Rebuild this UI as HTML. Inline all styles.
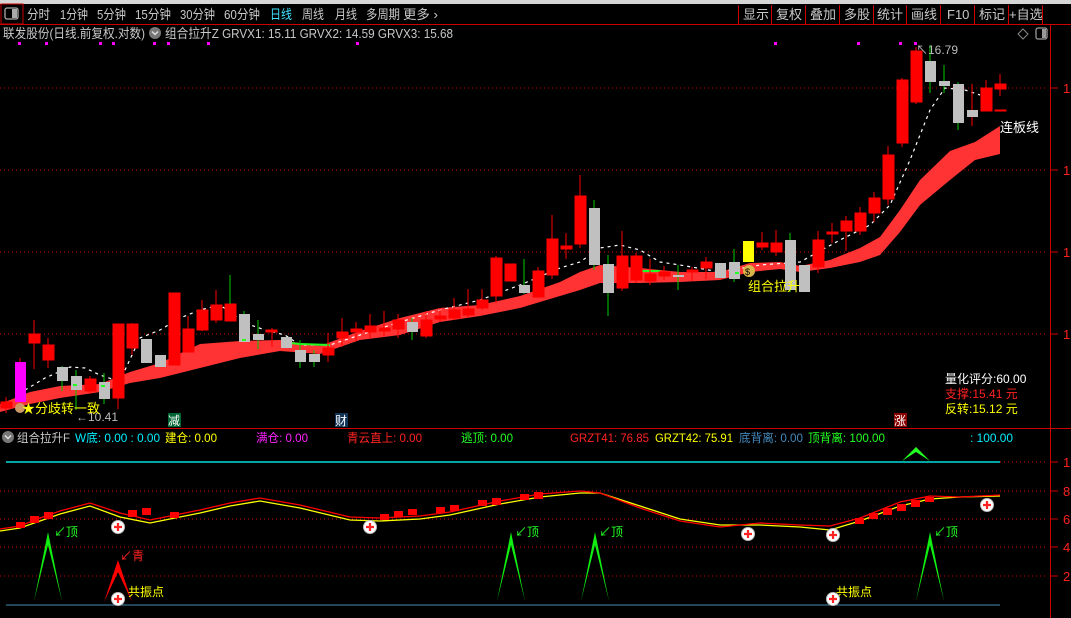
<!DOCTYPE html>
<html><head><meta charset="utf-8"><style>
body{margin:0;background:#000;width:1071px;height:618px;overflow:hidden;font-family:"Liberation Sans","Noto Sans CJK SC",sans-serif;}
svg{position:absolute;left:0;top:0}
text{font-family:"Liberation Sans","Noto Sans CJK SC",sans-serif;}
</style></head><body>
<svg width="1071" height="618" viewBox="0 0 1071 618" xmlns="http://www.w3.org/2000/svg">
<rect x="0" y="0" width="1071" height="4" fill="#d6d6d6"/>
<rect x="1" y="4" width="22" height="20" fill="none" stroke="#c00" stroke-width="1"/>
<rect x="5" y="8" width="13" height="11" rx="2" fill="none" stroke="#aaa" stroke-width="1.3"/><rect x="12" y="9" width="5" height="9" fill="#aaa"/>
<line x1="0" y1="24.5" x2="1071" y2="24.5" stroke="#c00"/>
<g font-size="13" fill="#c8c8c8">
<text x="27" y="19" textLength="23" lengthAdjust="spacingAndGlyphs">分时</text><text x="60" y="19" textLength="28" lengthAdjust="spacingAndGlyphs">1分钟</text><text x="97" y="19" textLength="29" lengthAdjust="spacingAndGlyphs">5分钟</text><text x="135" y="19" textLength="36" lengthAdjust="spacingAndGlyphs">15分钟</text><text x="180" y="19" textLength="35" lengthAdjust="spacingAndGlyphs">30分钟</text><text x="224" y="19" textLength="36" lengthAdjust="spacingAndGlyphs">60分钟</text><text x="270" y="19" fill="#3fe3ff" textLength="22" lengthAdjust="spacingAndGlyphs">日线</text><text x="302" y="19" textLength="22" lengthAdjust="spacingAndGlyphs">周线</text><text x="335" y="19" textLength="22" lengthAdjust="spacingAndGlyphs">月线</text><text x="366" y="19" textLength="34" lengthAdjust="spacingAndGlyphs">多周期</text><text x="403" y="19" textLength="35" lengthAdjust="spacingAndGlyphs">更多 ›</text>
<text x="743" y="19">显示</text><text x="776" y="19">复权</text><text x="810" y="19">叠加</text><text x="844" y="19">多股</text><text x="877" y="19">统计</text><text x="911" y="19">画线</text><text x="947" y="19">F10</text><text x="979" y="19">标记</text><text x="1009" y="19">+自选</text>
</g>
<g stroke="#c00"><line x1="738.5" y1="5" x2="738.5" y2="24"/><line x1="771.5" y1="5" x2="771.5" y2="24"/><line x1="805.5" y1="5" x2="805.5" y2="24"/><line x1="839.5" y1="5" x2="839.5" y2="24"/><line x1="873.5" y1="5" x2="873.5" y2="24"/><line x1="906.5" y1="5" x2="906.5" y2="24"/><line x1="940.5" y1="5" x2="940.5" y2="24"/><line x1="974.5" y1="5" x2="974.5" y2="24"/><line x1="1008.5" y1="5" x2="1008.5" y2="24"/><line x1="1042.5" y1="5" x2="1042.5" y2="24"/></g>
<line x1="1050.5" y1="25" x2="1050.5" y2="618" stroke="#c00"/>
<line x1="0" y1="428.5" x2="1071" y2="428.5" stroke="#c00"/>
<g stroke="#c00" stroke-dasharray="1,3"><line x1="0" y1="88" x2="1048" y2="88"/><line x1="0" y1="170" x2="1048" y2="170"/><line x1="0" y1="252" x2="1048" y2="252"/><line x1="0" y1="334" x2="1048" y2="334"/>
<line x1="0" y1="491" x2="1048" y2="491"/><line x1="0" y1="519" x2="1048" y2="519"/><line x1="0" y1="547" x2="1048" y2="547"/><line x1="0" y1="576" x2="1048" y2="576"/><line x1="1000" y1="462" x2="1048" y2="462"/></g>
<g stroke="#c00"><line x1="1050" y1="88" x2="1058" y2="88"/><line x1="1050" y1="170" x2="1058" y2="170"/><line x1="1050" y1="252" x2="1058" y2="252"/><line x1="1050" y1="334" x2="1058" y2="334"/><line x1="1050" y1="462" x2="1058" y2="462"/><line x1="1050" y1="491" x2="1058" y2="491"/><line x1="1050" y1="519" x2="1058" y2="519"/><line x1="1050" y1="547" x2="1058" y2="547"/><line x1="1050" y1="576" x2="1058" y2="576"/></g>
<g font-size="13" fill="#ff2020"><text x="1063" y="93">1</text><text x="1063" y="175">1</text><text x="1063" y="257">1</text><text x="1063" y="339">1</text><text x="1063" y="467">1</text><text x="1063" y="496">8</text><text x="1063" y="524">6</text><text x="1063" y="552">4</text><text x="1063" y="581">2</text></g>
<g font-size="13"><text x="3" y="38" fill="#c8c8c8" textLength="142" lengthAdjust="spacingAndGlyphs">联发股份(日线.前复权.对数)</text>
<circle cx="155" cy="33" r="6" fill="#777"/><path d="M152 31.5l3 3 3-3" stroke="#ddd" stroke-width="1.5" fill="none"/>
<text x="165" y="38" fill="#c8c8c8" textLength="288" lengthAdjust="spacingAndGlyphs">组合拉升Z  GRVX1: 15.11  GRVX2: 14.59  GRVX3: 15.68</text></g>
<path d="M1023 29l5 5-5 5-5-5z" fill="none" stroke="#888"/>
<rect x="1036" y="28" width="11" height="11" rx="2" fill="none" stroke="#999" stroke-width="1.3"/><rect x="1042" y="29" width="4" height="9" fill="#999"/>
<g fill="#f0f"><rect x="18" y="42" width="3" height="3"/><rect x="45" y="42" width="3" height="3"/><rect x="99" y="42" width="3" height="3"/><rect x="112" y="42" width="3" height="3"/><rect x="153" y="42" width="3" height="3"/><rect x="167" y="42" width="3" height="3"/><rect x="207" y="42" width="3" height="3"/><rect x="356" y="42" width="3" height="3"/><rect x="774" y="42" width="3" height="3"/><rect x="857" y="42" width="3" height="3"/><rect x="899" y="42" width="3" height="3"/><rect x="914" y="42" width="3" height="3"/></g>
<polygon fill="#ff3333" points="0,404 30,392 60,386 100,384 130,372 160,363 200,344 240,341 280,340 320,346 360,331 400,318 440,308 480,305 520,296 560,282 580,272 600,265 640,268 680,272 720,272 750,263 780,262 800,266 830,260 860,248 880,237 900,210 920,180 950,151 975,142 1000,126 1000,154 975,160 950,180 920,205 900,232 880,255 860,262 830,268 800,272 780,269 750,272 720,280 680,282 640,283 600,283 580,290 560,296 520,308 480,316 440,322 400,335 360,340 320,354 280,351 240,358 200,368 160,378 130,383 100,392 60,398 30,404 0,412"/>
<polyline fill="none" stroke="#fff" stroke-width="1.2" stroke-dasharray="3,4" points="25,390 45,378 70,367 85,368 100,375 115,380 125,370 140,338 160,330 180,318 200,310 220,305 245,323 265,330 285,335 300,345 330,345 360,335 400,322 440,310 480,300 520,285 560,268 580,262 600,248 620,245 640,250 660,262 680,265 720,272 760,265 800,262 840,240 870,225 890,205 910,160 930,110 945,88 965,90 980,95"/>
<polyline fill="none" stroke="#2f2" stroke-width="2" points="290,343 300,344 330,345"/>
<line x1="636" y1="271" x2="660" y2="271" stroke="#2f2" stroke-width="2"/>
<g stroke-width="1">
<g stroke="#f00" fill="#f00">
<line x1="6" y1="397" x2="6" y2="413"/><rect x="1" y="402" width="11" height="6"/>
<line x1="34" y1="320" x2="34" y2="369"/><rect x="29" y="334" width="11" height="9"/>
<line x1="48" y1="338" x2="48" y2="368"/><rect x="43" y="345" width="11" height="15"/>
<line x1="90" y1="376" x2="90" y2="394"/><rect x="85" y="379" width="11" height="12"/>
<line x1="118" y1="324" x2="118" y2="409"/><rect x="113" y="324" width="11" height="74"/>
<line x1="132" y1="323" x2="132" y2="355"/><rect x="127" y="324" width="11" height="24"/>
<line x1="174" y1="293" x2="174" y2="365"/><rect x="169" y="293" width="11" height="72"/>
<line x1="188" y1="316" x2="188" y2="352"/><rect x="183" y="329" width="11" height="23"/>
<line x1="202" y1="300" x2="202" y2="331"/><rect x="197" y="310" width="11" height="20"/>
<line x1="216" y1="290" x2="216" y2="323"/><rect x="211" y="305" width="11" height="15"/>
<rect x="225" y="304" width="11" height="17"/>
<line x1="272" y1="328" x2="272" y2="347"/><rect x="266" y="330" width="11" height="2"/>
<line x1="328" y1="333" x2="328" y2="362"/><rect x="323" y="348" width="11" height="7"/>
<line x1="342" y1="318" x2="342" y2="347"/><rect x="337" y="332" width="11" height="6"/>
<line x1="356" y1="322" x2="356" y2="341"/><rect x="351" y="329" width="11" height="3"/>
<line x1="370" y1="314" x2="370" y2="338"/><rect x="365" y="326" width="11" height="6"/>
<line x1="384" y1="311" x2="384" y2="336"/><rect x="379" y="328" width="11" height="3"/>
<line x1="398" y1="314" x2="398" y2="338"/><rect x="393" y="320" width="11" height="9"/>
<line x1="426" y1="311" x2="426" y2="338"/><rect x="421" y="320" width="11" height="16"/>
<line x1="440" y1="308" x2="440" y2="322"/><rect x="435" y="316" width="11" height="3"/>
<line x1="454" y1="298" x2="454" y2="320"/><rect x="449" y="310" width="11" height="8"/>
<line x1="468" y1="289" x2="468" y2="318"/><rect x="463" y="309" width="11" height="6"/>
<line x1="482" y1="289" x2="482" y2="310"/><rect x="477" y="300" width="11" height="8"/>
<line x1="496" y1="256" x2="496" y2="303"/><rect x="491" y="258" width="11" height="38"/>
<rect x="505" y="264" width="11" height="17"/>
<line x1="538" y1="267" x2="538" y2="298"/><rect x="533" y="271" width="11" height="26"/>
<line x1="552" y1="215" x2="552" y2="279"/><rect x="547" y="239" width="11" height="36"/>
<line x1="566" y1="233" x2="566" y2="259"/><rect x="561" y="246" width="11" height="3"/>
<line x1="580" y1="175" x2="580" y2="248"/><rect x="575" y="196" width="11" height="48"/>
<line x1="622" y1="231" x2="622" y2="291"/><rect x="617" y="256" width="11" height="32"/>
<line x1="636" y1="253" x2="636" y2="283"/><rect x="631" y="256" width="11" height="24"/>
<line x1="650" y1="259" x2="650" y2="285"/><rect x="645" y="274" width="11" height="7"/>
<line x1="664" y1="266" x2="664" y2="280"/><rect x="659" y="272" width="11" height="4"/>
<line x1="692" y1="267" x2="692" y2="281"/><rect x="687" y="270" width="11" height="2"/>
<line x1="706" y1="257" x2="706" y2="279"/><rect x="701" y="262" width="11" height="6"/>
<line x1="762" y1="232" x2="762" y2="250"/><rect x="757" y="243" width="11" height="4"/>
<line x1="776" y1="230" x2="776" y2="256"/><rect x="771" y="243" width="11" height="9"/>
<line x1="818" y1="231" x2="818" y2="273"/><rect x="813" y="240" width="11" height="27"/>
<line x1="832" y1="223" x2="832" y2="243"/><rect x="827" y="232" width="11" height="2"/>
<line x1="846" y1="216" x2="846" y2="251"/><rect x="841" y="221" width="11" height="10"/>
<line x1="860" y1="207" x2="860" y2="235"/><rect x="855" y="213" width="11" height="18"/>
<line x1="874" y1="192" x2="874" y2="222"/><rect x="869" y="198" width="11" height="15"/>
<line x1="888" y1="146" x2="888" y2="205"/><rect x="883" y="155" width="11" height="44"/>
<line x1="902" y1="78" x2="902" y2="147"/><rect x="897" y="80" width="11" height="63"/>
<line x1="916" y1="47" x2="916" y2="104"/><rect x="911" y="51" width="11" height="51"/>
<line x1="958" y1="84" x2="958" y2="126"/>
<line x1="972" y1="84" x2="972" y2="126"/>
<line x1="986" y1="80" x2="986" y2="111"/><rect x="981" y="88" width="11" height="23"/>
<line x1="1000" y1="74" x2="1000" y2="96"/><rect x="995" y="84" width="11" height="5"/>
<rect x="995" y="110" width="11" height="1"/>
</g>
<rect x="15" y="362" width="11" height="40" fill="#f0f"/><line x1="20" y1="358" x2="20" y2="362" stroke="#f00"/>
<g stroke="#0c0">
<line x1="62" y1="366" x2="62" y2="391"/><line x1="76" y1="370" x2="76" y2="410"/><line x1="104" y1="373" x2="104" y2="404"/><line x1="230" y1="275" x2="230" y2="304"/><line x1="244" y1="311" x2="244" y2="342"/><line x1="258" y1="320" x2="258" y2="349"/><line x1="300" y1="340" x2="300" y2="368"/><line x1="314" y1="350" x2="314" y2="367"/><line x1="412" y1="318" x2="412" y2="340"/><line x1="524" y1="259" x2="524" y2="294"/><line x1="594" y1="200" x2="594" y2="270"/><line x1="608" y1="255" x2="608" y2="316"/><line x1="678" y1="265" x2="678" y2="290"/><line x1="734" y1="249" x2="734" y2="282"/><line x1="790" y1="233" x2="790" y2="292"/><line x1="930" y1="45" x2="930" y2="93"/><line x1="944" y1="65" x2="944" y2="93"/><line x1="958" y1="82" x2="958" y2="130"/>
</g>
<g fill="#c0c0c0">
<rect x="57" y="367" width="11" height="14"/><rect x="71" y="376" width="11" height="14"/><rect x="99" y="382" width="11" height="17"/><rect x="141" y="339" width="11" height="24"/><rect x="155" y="355" width="11" height="12"/><rect x="239" y="314" width="11" height="28"/><rect x="253" y="334" width="11" height="6"/><rect x="281" y="337" width="11" height="11"/><rect x="295" y="350" width="11" height="12"/><rect x="309" y="354" width="11" height="8"/><rect x="407" y="322" width="11" height="10"/><rect x="519" y="285" width="11" height="8"/><rect x="589" y="208" width="11" height="57"/><rect x="603" y="264" width="11" height="29"/><rect x="673" y="275" width="11" height="2"/><rect x="715" y="263" width="11" height="15"/><rect x="729" y="262" width="11" height="17"/><rect x="785" y="240" width="11" height="50"/><rect x="799" y="265" width="11" height="27"/><rect x="925" y="61" width="11" height="21"/><rect x="939" y="81" width="11" height="5"/><rect x="953" y="84" width="11" height="39"/><rect x="967" y="110" width="11" height="7"/>
</g>
<rect x="743" y="241" width="11" height="21" fill="#ff0"/>
<g fill="#2f2"><rect x="73" y="384" width="4" height="2"/><rect x="101" y="385" width="4" height="2"/><rect x="242" y="339" width="4" height="2"/><rect x="735" y="272" width="4" height="2"/></g>
</g>
<text x="916" y="54" font-size="12" fill="#bbb">↖16.79</text>
<text x="76" y="421" font-size="12" fill="#bbb">←10.41</text>
<circle cx="20" cy="408" r="5" fill="#c96"/>
<text x="22" y="413" font-size="13" fill="#ff0">★分歧转一致</text>
<circle cx="749" cy="271" r="6" fill="#dbb44a"/><text x="745" y="275" font-size="9" fill="#000">$</text>
<text x="748" y="291" font-size="13" fill="#ff0">组合拉升</text>
<text x="1000" y="132" font-size="13" fill="#fff">连板线</text>
<text x="945" y="383" font-size="12" fill="#fff">量化评分:60.00</text>
<text x="945" y="398" font-size="12" fill="#f22">支撑:15.41 元</text>
<text x="945" y="413" font-size="12" fill="#ff0">反转:15.12 元</text>
<rect x="168" y="413" width="13" height="14" fill="#063"/><text x="168" y="425" font-size="12" fill="#fff">减</text>
<rect x="335" y="413" width="13" height="14" fill="#135"/><text x="335" y="425" font-size="12" fill="#fff">财</text>
<rect x="894" y="413" width="13" height="14" fill="#800"/><text x="894" y="425" font-size="12" fill="#fff">涨</text>
<circle cx="8" cy="437" r="6" fill="#777"/><path d="M5 435.5l3 3 3-3" stroke="#ddd" stroke-width="1.5" fill="none"/>
<g font-size="12"><text x="17" y="442" fill="#c8c8c8" textLength="53" lengthAdjust="spacingAndGlyphs">组合拉升F</text><text x="75" y="442" fill="#0ef" textLength="85" lengthAdjust="spacingAndGlyphs">W底: 0.00  : 0.00</text><text x="165" y="442" fill="#ff0" textLength="52" lengthAdjust="spacingAndGlyphs">建仓: 0.00</text><text x="256" y="442" fill="#f2f" textLength="52" lengthAdjust="spacingAndGlyphs">满仓: 0.00</text><text x="347" y="442" fill="#f22" textLength="75" lengthAdjust="spacingAndGlyphs">青云直上: 0.00</text><text x="461" y="442" fill="#2f2" textLength="52" lengthAdjust="spacingAndGlyphs">逃顶: 0.00</text><text x="570" y="442" fill="#f22" textLength="79" lengthAdjust="spacingAndGlyphs">GRZT41: 76.85</text><text x="655" y="442" fill="#ff0" textLength="78" lengthAdjust="spacingAndGlyphs">GRZT42: 75.91</text><text x="739" y="442" fill="#48b" textLength="64" lengthAdjust="spacingAndGlyphs">底背离: 0.00</text><text x="808" y="442" fill="#2f2" textLength="77" lengthAdjust="spacingAndGlyphs">顶背离: 100.00</text><text x="970" y="442" fill="#0ef" textLength="43" lengthAdjust="spacingAndGlyphs">: 100.00</text></g>
<line x1="6" y1="462" x2="1000" y2="462" stroke="#0dd" stroke-width="1.5"/>
<polygon points="902,461 916,447 930,461 916,452" fill="#2f2"/>
<line x1="6" y1="605" x2="1000" y2="605" stroke="#4a8ab0" stroke-width="1"/>
<polyline fill="none" stroke="#ff0" stroke-width="1.3" points="0,531 20,528 40,521 60,514 90,506 120,517 150,523 200,513 230,506 260,501 300,508 350,520 380,521 420,519 450,515 500,504 540,497 580,493 600,493 640,506 680,519 720,525 760,525 800,527 830,530 860,521 900,506 930,499 960,497 1000,496"/>
<polyline fill="none" stroke="#f00" stroke-width="1.3" points="0,529 20,526 40,518 60,511 90,503 120,513 150,520 200,510 230,503 260,498 300,505 350,517 380,518 420,516 450,512 500,501 540,494 580,491 600,493 640,508 680,521 720,527 760,523 800,525 830,526 860,518 900,502 930,496 960,497 1000,495"/>
<g fill="#f00"><rect x="16" y="522" width="9" height="6"/><rect x="30" y="516" width="9" height="7"/><rect x="44" y="512" width="9" height="7"/><rect x="128" y="510" width="9" height="7"/><rect x="142" y="508" width="9" height="7"/><rect x="170" y="512" width="9" height="6"/><rect x="380" y="514" width="9" height="6"/><rect x="394" y="511" width="9" height="6"/><rect x="408" y="509" width="9" height="6"/><rect x="436" y="507" width="9" height="6"/><rect x="450" y="505" width="9" height="6"/><rect x="478" y="500" width="9" height="6"/><rect x="492" y="498" width="9" height="7"/><rect x="520" y="494" width="9" height="6"/><rect x="534" y="492" width="9" height="7"/><rect x="855" y="518" width="9" height="6"/><rect x="869" y="513" width="9" height="6"/><rect x="883" y="508" width="9" height="7"/><rect x="897" y="504" width="9" height="7"/><rect x="911" y="500" width="9" height="7"/><rect x="925" y="497" width="9" height="5"/></g>
<g fill="#1e1"><polygon points="34,601 48,532 62,601 48,545"/><polygon points="497,601 511,532 525,601 511,545"/><polygon points="581,601 595,532 609,601 595,545"/><polygon points="916,601 930,532 944,601 930,545"/></g>
<polygon points="104,602 118,560 132,602 118,572" fill="#f00"/>
<g font-size="12" fill="#2f2"><text x="54" y="536">↙顶</text><text x="515" y="536">↙顶</text><text x="599" y="536">↙顶</text><text x="934" y="536">↙顶</text></g>
<text x="120" y="560" font-size="12" fill="#f22">↙青</text>
<text x="128" y="596" font-size="12" fill="#ff0">共振点</text><text x="836" y="596" font-size="12" fill="#ff0">共振点</text>
<g>
<circle cx="118" cy="527" r="6.5" fill="#fff" stroke="#bbb"/><path d="M114 527h8M118 523v8" stroke="#f22" stroke-width="2.2"/>
<circle cx="370" cy="527" r="6.5" fill="#fff" stroke="#bbb"/><path d="M366 527h8M370 523v8" stroke="#f22" stroke-width="2.2"/>
<circle cx="748" cy="534" r="6.5" fill="#fff" stroke="#bbb"/><path d="M744 534h8M748 530v8" stroke="#f22" stroke-width="2.2"/>
<circle cx="833" cy="535" r="6.5" fill="#fff" stroke="#bbb"/><path d="M829 535h8M833 531v8" stroke="#f22" stroke-width="2.2"/>
<circle cx="987" cy="505" r="6.5" fill="#fff" stroke="#bbb"/><path d="M983 505h8M987 501v8" stroke="#f22" stroke-width="2.2"/>
<circle cx="118" cy="599" r="6.5" fill="#fff" stroke="#bbb"/><path d="M114 599h8M118 595v8" stroke="#f22" stroke-width="2.2"/>
<circle cx="833" cy="599" r="6.5" fill="#fff" stroke="#bbb"/><path d="M829 599h8M833 595v8" stroke="#f22" stroke-width="2.2"/>
</g>
</svg>
</body></html>
